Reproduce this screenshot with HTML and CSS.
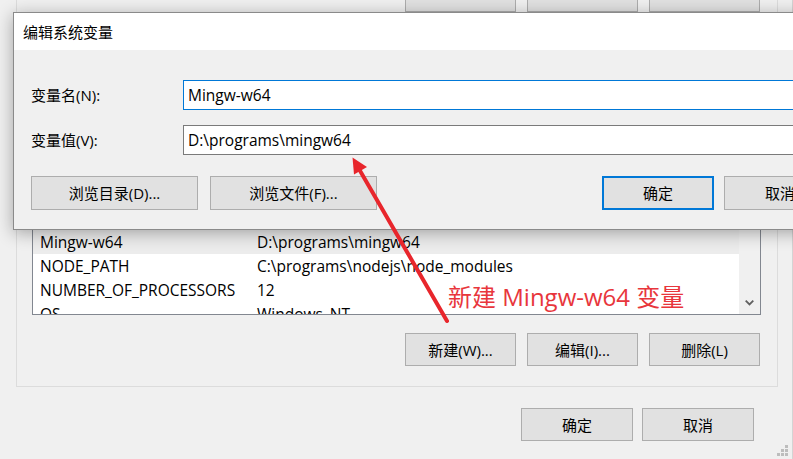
FILE: index.html
```html
<!DOCTYPE html>
<html lang="zh-CN">
<head>
<meta charset="utf-8">
<title>编辑系统变量</title>
<link rel="stylesheet" href="styles.css">
</head>
<body>
<div class="window">
  <div class="group upper">
    <div class="btn-row">
      <button class="btn" aria-label="新建"></button>
      <button class="btn" aria-label="编辑"></button>
      <button class="btn" aria-label="删除"></button>
    </div>
  </div>
  <div class="group lower">
    <div class="listbox">
      <div class="list">
        <div class="row head"><span>变量</span><span>值</span></div>
        <div class="row"><span>ComSpec</span><span>C:\Windows\system32\cmd.exe</span></div>
        <div class="row"><span>DriverData</span><span>C:\Windows\System32\Drivers\DriverData</span></div>
        <div class="row"><span>GOPATH</span><span>D:\programs\go</span></div>
        <div class="row"><span>JAVA_HOME</span><span>C:\programs\java\jdk</span></div>
        <div class="row"><span>MAVEN_HOME</span><span>C:\programs\maven</span></div>
        <div class="row selected"><span>Mingw-w64</span><span>D:\programs\mingw64</span></div>
        <div class="row"><span>NODE_PATH</span><span>C:\programs\nodejs\node_modules</span></div>
        <div class="row"><span>NUMBER_OF_PROCESSORS</span><span>12</span></div>
        <div class="row"><span>OS</span><span>Windows_NT</span></div>
      </div>
      <div class="scrollbar">
        <svg class="chevron" width="9" height="6" viewBox="0 0 9 6"><path d="M0.7 0.7 L4.5 4.5 L8.3 0.7" fill="none" stroke="#606060" stroke-width="1.8"/></svg>
      </div>
    </div>
    <div class="btn-row">
      <button class="btn">新建(W)...</button>
      <button class="btn">编辑(I)...</button>
      <button class="btn">删除(L)</button>
    </div>
  </div>
  <div class="btn-row footer">
    <button class="btn btn-wide">确定</button>
    <button class="btn btn-wide">取消</button>
  </div>
  <svg class="grip" width="12" height="12" viewBox="0 0 12 12">
    <rect x="8" y="0" width="3" height="3" fill="#bdbdbd"/>
    <rect x="4" y="4" width="3" height="3" fill="#bdbdbd"/>
    <rect x="8" y="4" width="3" height="3" fill="#bdbdbd"/>
    <rect x="0" y="8" width="3" height="3" fill="#bdbdbd"/>
    <rect x="4" y="8" width="3" height="3" fill="#bdbdbd"/>
    <rect x="8" y="8" width="3" height="3" fill="#bdbdbd"/>
  </svg>
</div>

<div class="dialog">
  <div class="titlebar">编辑系统变量</div>
  <div class="dialog-body">
    <div class="fields">
      <label class="field-label">变量名(N):</label>
      <div class="input focused">Mingw-w64</div>
      <label class="field-label">变量值(V):</label>
      <div class="input">D:\programs\mingw64</div>
    </div>
    <div class="dlg-buttons">
      <button class="btn btn-browse">浏览目录(D)...</button>
      <button class="btn btn-browse">浏览文件(F)...</button>
      <button class="btn btn-ok">确定</button>
      <button class="btn btn-cancel">取消</button>
    </div>
  </div>
</div>

<svg class="arrow" width="793" height="459" viewBox="0 0 793 459">
  <line x1="447" y1="321" x2="359" y2="169" stroke="#e8262c" stroke-width="4" stroke-linecap="round"/>
  <polygon points="352.5,157.5 367,167 354,174.5" fill="#e8262c"/>
</svg>
<div class="note">新建 Mingw-w64 变量</div>
</body>
</html>
```

FILE: styles.css
```css
* { box-sizing: border-box; }

body {
  margin: 0;
  width: 793px;
  height: 459px;
  overflow: hidden;
  position: relative;
  background: #f0f0f0;
  font-family: "Open Sans", "Noto Sans CJK SC", sans-serif;
  font-size: 15px;
  line-height: 20px;
  color: #000;
}

.window {
  position: relative;
  width: 793px;
  height: 459px;
  display: flex;
  flex-direction: column;
  border-right: 1px solid #d4d4d4;
}

.group {
  margin-left: 16px;
  width: 762px;
  border: 1px solid #dcdcdc;
  flex-shrink: 0;
}

.upper {
  margin-top: -60px;
  padding: 38px 17px 19px 0;
}

.lower {
  margin-top: 20px;
  padding: 32px 17px 20px 15px;
}

.btn-row {
  display: flex;
  justify-content: flex-end;
  gap: 11px;
}

.lower .btn-row { margin-top: 18px; }

.footer {
  margin-top: 21px;
  padding-right: 38px;
  gap: 9px;
}

.btn {
  font: inherit;
  color: #000;
  width: 111px;
  height: 33px;
  padding: 0;
  background: #e1e1e1;
  border: 1px solid #adadad;
  display: flex;
  align-items: center;
  justify-content: center;
  white-space: nowrap;
}

.btn-wide { width: 112px; }

.listbox {
  width: 729px;
  height: 230px;
  border: 1px solid #828790;
  background: #fff;
  display: flex;
  overflow: hidden;
}

.list {
  flex: 1;
  min-width: 0;
  font-size: 15.5px;
}

.row {
  display: grid;
  grid-template-columns: 217px 1fr;
  height: 24px;
  align-items: center;
  white-space: nowrap;
}

.row span { padding-left: 7px; overflow: hidden; }

.row.selected { background: #ececec; }

.scrollbar {
  width: 21px;
  flex-shrink: 0;
  background: #f0f0f0;
  display: flex;
  flex-direction: column;
  justify-content: flex-end;
  align-items: center;
  padding-bottom: 8px;
}

.chevron { display: block; }

.grip {
  position: absolute;
  right: 3px;
  bottom: 2px;
}

/* dialog */
.dialog {
  position: absolute;
  left: 13px;
  top: 12px;
  width: 840px;
  border: 1px solid #8a8a8a;
  background: #f0f0f0;
  box-shadow: 0 3px 16px rgba(0, 0, 0, 0.32);
}

.titlebar {
  height: 37px;
  background: #fff;
  padding-left: 9px;
  display: flex;
  align-items: center;
}

.dialog-body {
  padding: 30px 16px 19px 17px;
}

.fields {
  display: grid;
  grid-template-columns: 152px 1fr;
  row-gap: 15px;
  align-items: center;
}

.input {
  height: 30px;
  border: 1px solid #7a7a7a;
  background: #fff;
  padding: 0 4px;
  display: flex;
  align-items: center;
  white-space: nowrap;
  font-size: 15.5px;
}

.input.focused { border-color: #0078d7; }

.dlg-buttons {
  display: flex;
  margin-top: 21px;
}

.dlg-buttons .btn { height: 34px; }

.btn-browse { width: 167px; }
.btn-browse + .btn-browse { margin-left: 12px; }
.btn-ok {
  width: 112px;
  margin-left: auto;
  border: 2px solid #0078d7;
}
.btn-cancel { width: 112px; margin-left: 10px; }

/* annotation overlay */
.arrow {
  position: absolute;
  left: 0;
  top: 0;
  pointer-events: none;
}

.note {
  position: absolute;
  left: 448px;
  top: 283px;
  font-size: 24px;
  line-height: 28px;
  color: #e8363c;
  white-space: nowrap;
}
```
